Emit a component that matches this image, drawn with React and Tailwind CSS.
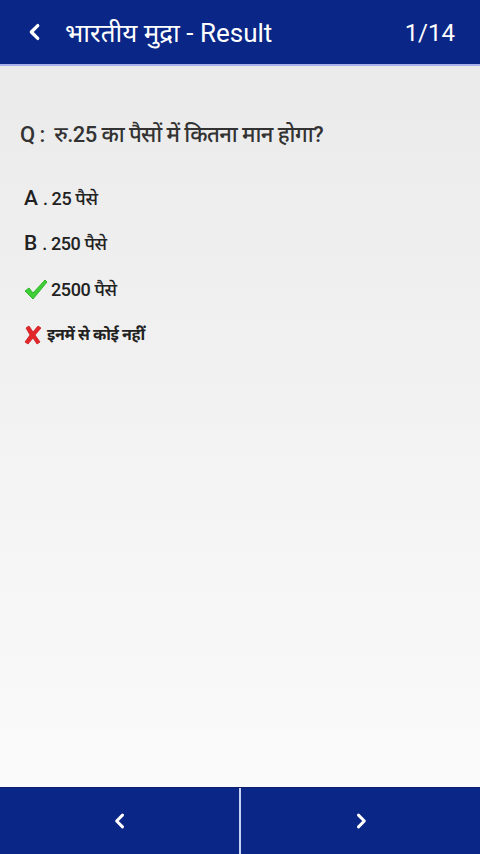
import React from "react";

const font = { fontFamily: "Roboto, 'Noto Sans', 'DejaVu Sans', sans-serif" };

function Chevron({ dir = "left", className = "" }) {
	return (
		<svg className={className} viewBox="0 0 24 24" fill="none" stroke="currentColor" strokeWidth={3.6} strokeLinecap="round" strokeLinejoin="round">
			{dir === "left" ? <path d="M15 5l-7 7 7 7" /> : <path d="M9 5l7 7-7 7" />}
		</svg>
	);
}

function Check() {
	return (
		<svg className="w-[24px] h-[22px]" viewBox="0 0 24 22">
			<path d="M1 13 L5 10 L9 15 L21 2 L23 4 L9 21 Z" fill="#3ecf37" stroke="#2fb52a" strokeWidth="1" strokeLinejoin="round" />
		</svg>
	);
}

function Cross() {
	return (
		<svg className="w-[18px] h-[20px]" viewBox="0 0 18 20">
			<path d="M2 3 L5 1 L9 7 L14 1 L17 3 L11 10 L16 17 L13 19 L9 13 L4 19 L1 17 L6 10 Z" fill="#e3262a" stroke="#c91c1f" strokeWidth="0.8" strokeLinejoin="round" />
		</svg>
	);
}

export default function App() {
	return (
		<div className="w-[480px] h-[854px] flex flex-col bg-gradient-to-b from-[#e9e9e9] to-[#fcfcfc]" style={font}>
			<div className="h-[66px] bg-[#0a2686] flex items-center text-white border-b-2 border-[#a9b2ea]">
				<Chevron className="w-[22px] h-[22px] ml-[24px]" />
				<div className="ml-[19px] text-[26px] leading-none pt-[2px]">भारतीय मुद्रा - Result</div>
				<div className="ml-auto mr-[25px] text-[24px] leading-none pt-[2px]">1/14</div>
			</div>

			<div className="flex-1 px-[20px] pt-[58px] text-[#333]">
				<div className="text-[22px] leading-none font-medium tracking-[-0.6px]">Q :&nbsp; रु.25 का पैसों में कितना मान होगा?</div>
				<div className="mt-[30px] flex flex-col pl-[4px] text-[#222]">
					<div className="flex items-center h-[45px]">
						<span className="text-[21px] font-medium">A</span>
						<span className="text-[18px] ml-[5px] font-medium tracking-[-0.4px]">. 25 पैसे</span>
					</div>
					<div className="flex items-center h-[45px]">
						<span className="text-[21px] font-medium">B</span>
						<span className="text-[18px] ml-[5px] font-medium tracking-[-0.4px]">. 250 पैसे</span>
					</div>
					<div className="flex items-center h-[46px]">
						<Check />
						<span className="text-[18px] ml-[3px] font-medium tracking-[-0.4px]">2500 पैसे</span>
					</div>
					<div className="flex items-center h-[46px]">
						<Cross />
						<span className="text-[16px] ml-[5px] tracking-[-0.4px] font-bold">इनमें से कोई नहीं</span>
					</div>
				</div>
			</div>

			<div className="h-[67px] bg-[#0a2686] flex text-white border-t border-[#0a1f70]">
				<div className="flex-1 flex items-center justify-center">
					<Chevron className="w-[20px] h-[20px]" />
				</div>
				<div className="w-[2px] bg-[#c9d0f5]" />
				<div className="flex-1 flex items-center justify-center">
					<Chevron dir="right" className="w-[20px] h-[20px]" />
				</div>
			</div>
		</div>
	);
}
